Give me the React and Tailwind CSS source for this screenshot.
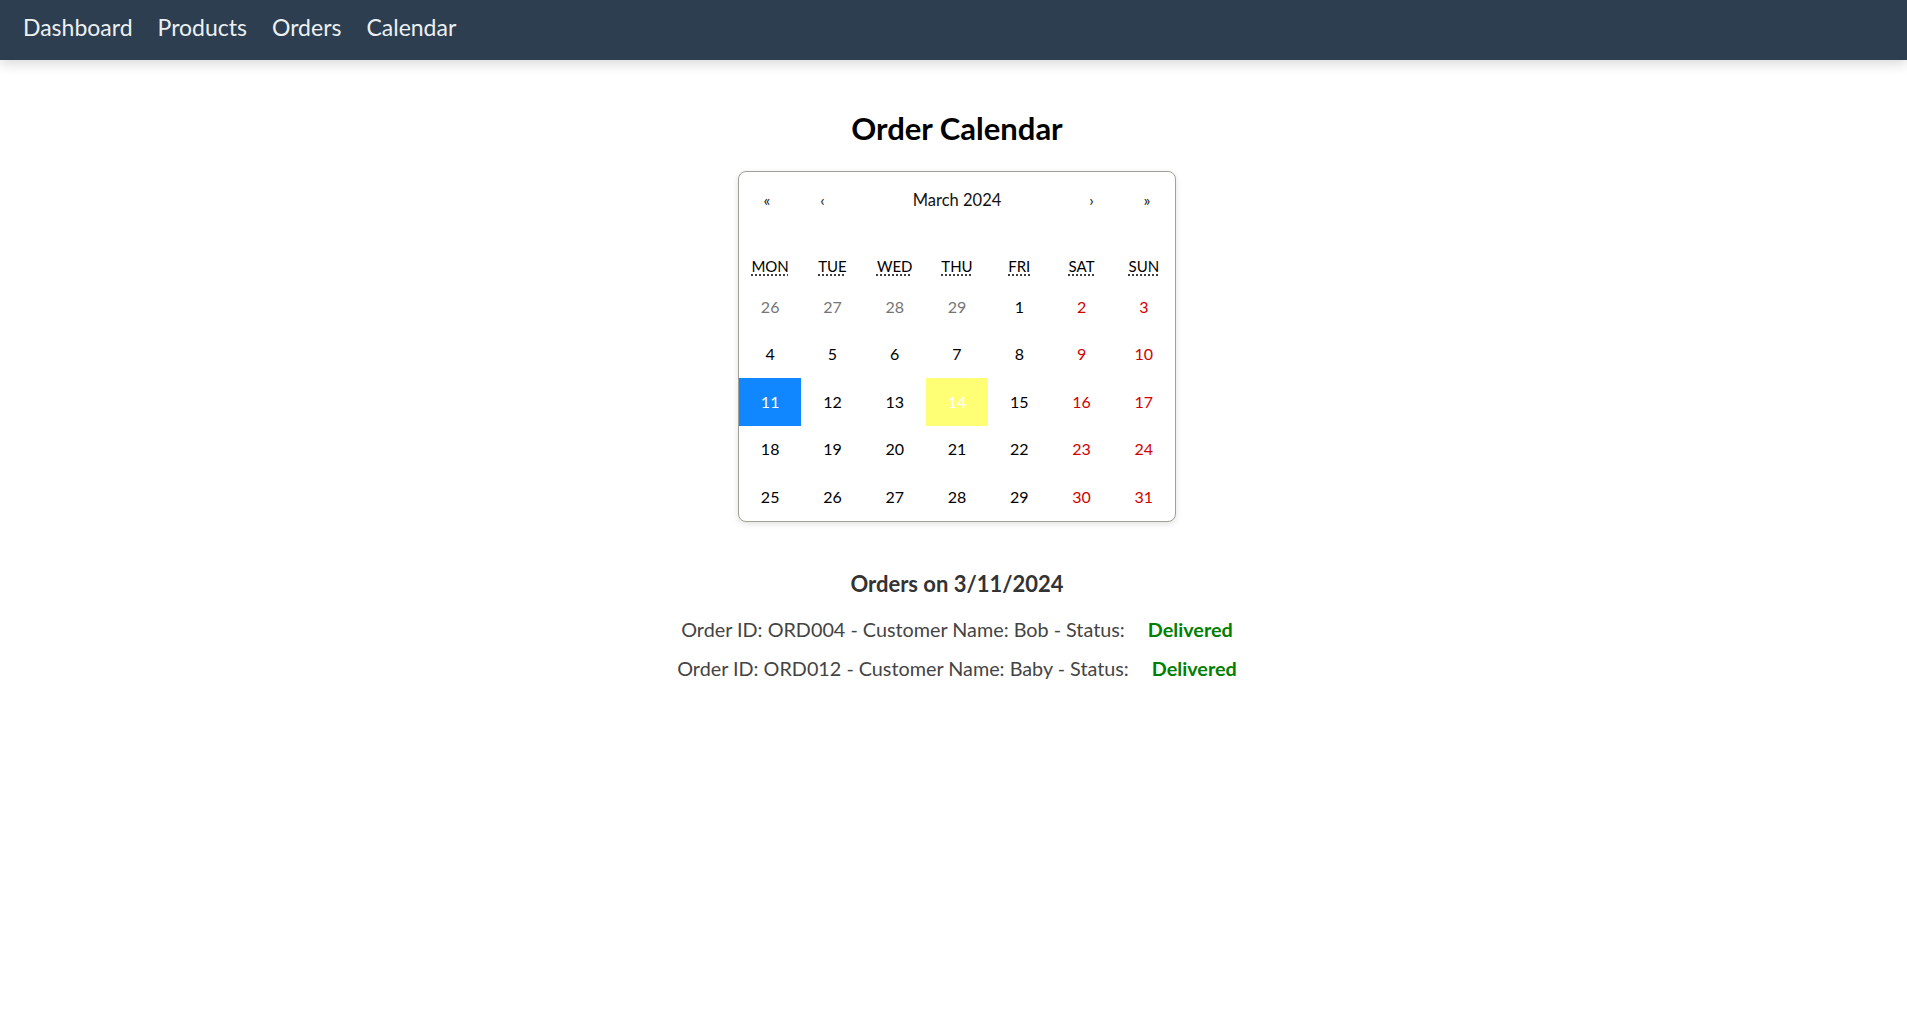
import { useState } from "react";

const NAV_LINKS = ["Dashboard", "Products", "Orders", "Calendar"];
const WEEKDAYS = [
  { short: "MON", long: "Monday" },
  { short: "TUE", long: "Tuesday" },
  { short: "WED", long: "Wednesday" },
  { short: "THU", long: "Thursday" },
  { short: "FRI", long: "Friday" },
  { short: "SAT", long: "Saturday" },
  { short: "SUN", long: "Sunday" },
];

const ORDERS = [
  { id: "ORD004", customer: "Bob", status: "Delivered", date: 11 },
  { id: "ORD012", customer: "Baby", status: "Delivered", date: 11 },
];

// March 2024 starts on a Friday, so the grid opens with four days of February
const buildDays = () => {
  const days = [26, 27, 28, 29].map((d) => ({ day: d, outside: true }));
  for (let d = 1; d <= 31; d++) days.push({ day: d, outside: false });
  return days;
};

const Tile = ({ day, outside, index, active, today, onSelect }) => {
  const weekend = index % 7 >= 5;
  let cls = "text-black";
  if (outside) cls = "text-[#757575]";
  else if (weekend) cls = "text-[#d10000]";
  if (active) cls = "bg-[#1087ff] text-white";
  else if (today) cls = "bg-[#ffff76] text-white";

  return (
    <button
      type="button"
      onClick={onSelect}
      className={`flex h-[47.5px] items-center justify-center text-[16px] ${cls}`}
    >
      {day}
    </button>
  );
};

const App = () => {
  const [selected, setSelected] = useState(11);
  const days = buildDays();
  const dayOrders = ORDERS.filter((o) => o.date === selected);

  return (
    <div className="min-h-screen bg-white font-['Lato','Noto_Sans',sans-serif]">
      <nav className="flex h-[60px] items-center gap-[25px] bg-[#2c3e50] px-[23px] pb-[5px] text-[23px] text-[#ecf0f1] shadow-[0_4px_12px_rgba(0,0,0,0.15)]">
        {NAV_LINKS.map((link) => (
          <a key={link} href="#" className="leading-none">
            {link}
          </a>
        ))}
      </nav>

      <main className="flex flex-col items-center pl-[7px] pt-[50px]">
        <h1 className="text-[31px] font-bold leading-[36px] text-black">Order Calendar</h1>

        <div className="mt-[25px] w-[438px] overflow-hidden rounded-[8px] border border-[#a0a096] bg-white shadow-[0_2px_6px_rgba(0,0,0,0.12)]">
          <div className="flex h-[56px] items-center text-[#111]">
            <button type="button" className="w-[56px] text-[16px]">«</button>
            <button type="button" className="w-[55px] text-[16px]">‹</button>
            <span className="flex-1 text-center text-[16.5px]">March 2024</span>
            <button type="button" className="w-[55px] text-[16px]">›</button>
            <button type="button" className="w-[56px] text-[16px]">»</button>
          </div>

          <div className="mt-[23px] grid h-[30px] grid-cols-7 items-center text-center text-[15px] text-black">
            {WEEKDAYS.map((w) => (
              <abbr key={w.short} title={w.long} className="underline decoration-dotted underline-offset-[3px]">
                {w.short}
              </abbr>
            ))}
          </div>

          <div className="mt-[2px] grid grid-cols-7">
            {days.map((d, i) => (
              <Tile
                key={i}
                index={i}
                day={d.day}
                outside={d.outside}
                active={!d.outside && d.day === selected}
                today={!d.outside && d.day === 14}
                onSelect={() => !d.outside && setSelected(d.day)}
              />
            ))}
          </div>
        </div>

        <h2 className="mt-[48px] text-[22px] font-bold leading-[28px] text-[#333]">
          Orders on 3/{selected}/2024
        </h2>

        <ul className="mt-[19px] flex flex-col items-center gap-[15px]">
          {dayOrders.map((o) => (
            <li key={o.id} className="text-[19.8px] leading-[24px] text-[#444]">
              Order ID: {o.id} - Customer Name: {o.customer} - Status:
              <span className="ml-[23px] font-bold text-[#008000]">{o.status}</span>
            </li>
          ))}
        </ul>
      </main>
    </div>
  );
};

export default App;
